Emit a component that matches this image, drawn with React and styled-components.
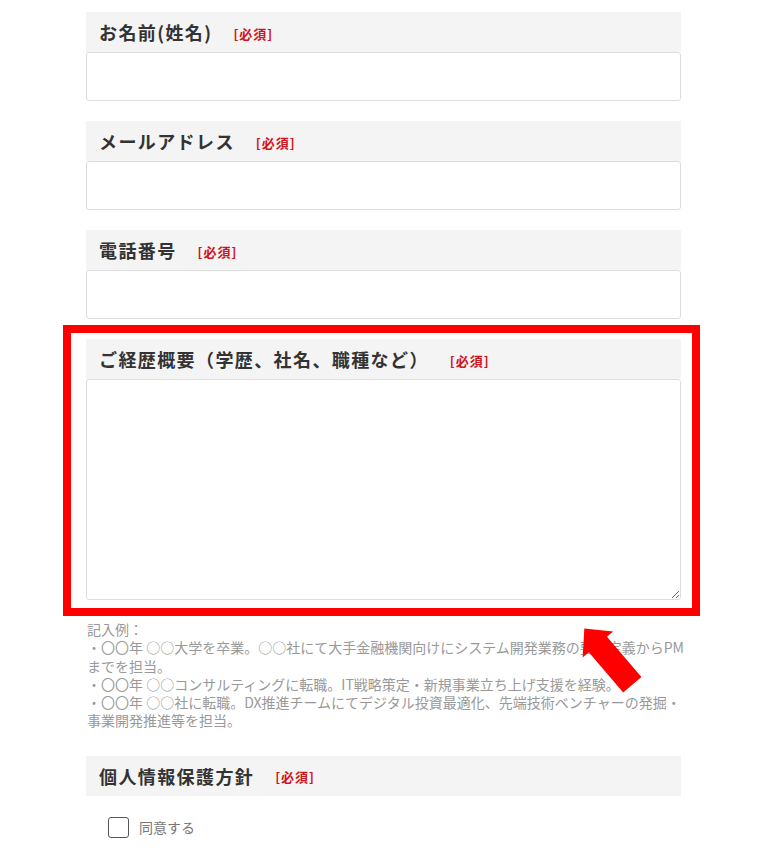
import React from 'react'
import styled, { createGlobalStyle } from 'styled-components'

const GlobalStyle = createGlobalStyle`
  body {
    margin: 0;
    background: #fff;
    font-family: "Noto Sans CJK JP", "Noto Sans", sans-serif;
  }
`

const fields = [
  { label: 'お名前(姓名)', type: 'input' },
  { label: 'メールアドレス', type: 'input' },
  { label: '電話番号', type: 'input' },
]

const App = () => {
  return (
    <Page>
      <GlobalStyle />
      <Form>
        {fields.map((f) => (
          <Field key={f.label}>
            <Header>
              <Label>{f.label}</Label>
              <Required>[必須]</Required>
            </Header>
            <Input type="text" />
          </Field>
        ))}

        <Highlight>
          <Header>
            <Label>ご経歴概要（学歴、社名、職種など）</Label>
            <Required>[必須]</Required>
          </Header>
          <TextArea />
        </Highlight>

        <Note>
          記入例：<br />
          ・〇〇年 ○○大学を卒業。○○社にて大手金融機関向けにシステム開発業務の要件定義からPM<br />
          までを担当。<br />
          ・〇〇年 ○○コンサルティングに転職。IT戦略策定・新規事業立ち上げ支援を経験。<br />
          ・〇〇年 ○○社に転職。DX推進チームにてデジタル投資最適化、先端技術ベンチャーの発掘・<br />
          事業開発推進等を担当。
        </Note>

        <Field $top={26}>
          <Header>
            <Label>個人情報保護方針</Label>
            <Required>[必須]</Required>
          </Header>
          <Agree>
            <Box type="checkbox" />
            <AgreeText>同意する</AgreeText>
          </Agree>
        </Field>
      </Form>

      <Arrow width="75" height="80" viewBox="0 0 75 80">
        <polygon
          points="9.3,8.5 38.1,11.5 32,16.7 66.4,57 48.2,72.6 13.8,32.3 7.7,37.5"
          fill="#ff0000"
        />
      </Arrow>
    </Page>
  )
}

export default App

const Page = styled.div`
  position: relative;
  width: 760px;
  min-height: 858px;
  padding: 12px 0 0 86px;
  box-sizing: border-box;
`

const Form = styled.div`
  width: 595px;
  display: flex;
  flex-direction: column;
`

const Field = styled.div`
  display: flex;
  flex-direction: column;
  margin-top: ${(p) => p.$top || 0}px;
  margin-bottom: 20px;
`

const Header = styled.div`
  height: 40px;
  background: #f4f4f4;
  padding-left: 13px;
  display: flex;
  align-items: center;
`

const Label = styled.span`
  font-size: 18px;
  font-weight: 700;
  letter-spacing: 1.4px;
  color: #333;
`

const Required = styled.span`
  margin-left: 21px;
  margin-top: 2px;
  font-size: 13px;
  font-weight: 700;
  letter-spacing: 1px;
  color: #d0121b;
`

const Input = styled.input`
  height: 49px;
  width: 100%;
  box-sizing: border-box;
  border: 1px solid #ddd;
  border-radius: 3px;
  background: #fff;
  outline: none;
`

const Highlight = styled.div`
  display: flex;
  flex-direction: column;
  margin: -14px -19px 0 -23px;
  padding: 6px 11px 8px 15px;
  border: 8px solid #ff0000;
`

const TextArea = styled.textarea`
  height: 221px;
  width: 100%;
  box-sizing: border-box;
  border: 1px solid #ddd;
  border-radius: 3px;
  background: #fff;
  resize: vertical;
  outline: none;
`

const Note = styled.div`
  margin-top: 4px;
  padding-left: 1px;
  font-size: 14px;
  line-height: 18.3px;
  color: #999;
  white-space: nowrap;
`

const Agree = styled.label`
  display: flex;
  align-items: center;
  gap: 10px;
  margin-top: 21px;
  padding-left: 22px;
`

const Box = styled.input`
  appearance: none;
  width: 21px;
  height: 21px;
  margin: 0;
  border: 1.5px solid #555;
  border-radius: 3px;
  background: #fff;
`

const AgreeText = styled.span`
  font-size: 14px;
  color: #777;
`

const Arrow = styled.svg`
  position: absolute;
  left: 575px;
  top: 620px;
`
